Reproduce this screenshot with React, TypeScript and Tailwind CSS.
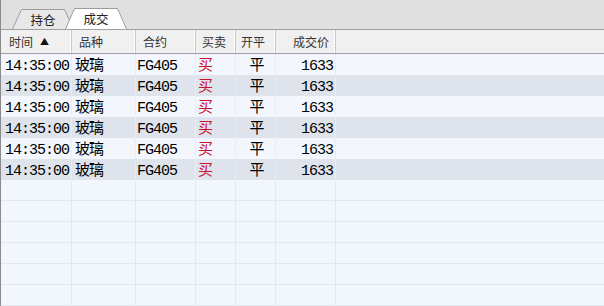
import React from "react";

const cols = [
  { w: 72, label: "时间", hAlign: "justify-start pl-[8px]", dAlign: "justify-start pl-[4px]" },
  { w: 64, label: "品种", hAlign: "justify-start pl-[7px]", dAlign: "justify-start pl-[3px]" },
  { w: 60, label: "合约", hAlign: "justify-start pl-[7px]", dAlign: "justify-start pl-[1px]" },
  { w: 40, label: "买卖", hAlign: "justify-start pl-[6px]", dAlign: "justify-start pl-[2px]" },
  { w: 40, label: "开平", hAlign: "justify-start pl-[5px]", dAlign: "justify-center pl-[2px]" },
  { w: 60, label: "成交价", hAlign: "justify-end pr-[6px]", dAlign: "justify-end pr-[2px]" },
];

const rowData = ["14:35:00", "玻璃", "FG405", "买", "平", "1633"];

const dataFont = { fontFamily: '"Liberation Mono", "Noto Sans CJK SC", monospace' };

function Tab({ label, active, left, width }: { label: string; active: boolean; left: number; width: number }) {
  const h = active ? 21 : 20;
  return (
    <div
      className={`absolute bottom-0 flex items-center justify-center text-[12.5px] text-[#222] ${active ? "z-10" : "z-0"}`}
      style={{ left, width, height: h, fontFamily: '"Noto Sans CJK SC", sans-serif' }}
    >
      <svg className="absolute inset-0" width={width} height={h} viewBox={`0 0 ${width} ${h}`}>
        <path
          d={`M0.5 ${h} L${9.5} 0.5 L${width - 9.5} 0.5 L${width - 0.5} ${h}`}
          fill={active ? "#ffffff" : "#e8e8e8"}
          stroke="#9c9c9c"
          strokeWidth="1"
        />
      </svg>
      <span className="relative pt-[2px]">{label}</span>
    </div>
  );
}

export default function App() {
  const rows = Array.from({ length: 12 }, (_, i) => i);
  return (
    <div className="w-[604px] h-[306px] overflow-hidden bg-[#e0e0e0] border-l border-[#8a8a8a] flex flex-col">
      <div className="relative h-[30px] shrink-0 border-b border-[#a0a0a0]">
        <Tab label="持仓" active={false} left={11} width={62} />
        <Tab label="成交" active={true} left={64} width={62} />
      </div>
      <div
        className="flex h-[24px] shrink-0 bg-[#f0f0f0] border-b border-[#a0a0a0] text-[12px] text-[#333]"
        style={{ fontFamily: '"Noto Sans CJK SC", sans-serif' }}
      >
        {cols.map((c, i) => (
          <div
            key={i}
            className={`flex items-center border-r border-[#c8c8c8] shadow-[inset_-1px_0_0_#ffffff] ${c.hAlign}`}
            style={{ width: i === 0 ? c.w - 1 : c.w }}
          >
            {c.label}
            {i === 0 && <span className="ml-[7px] text-[9px] text-[#111]">▲</span>}
          </div>
        ))}
      </div>
      <div className="flex-1 bg-[#f2f6fd]">
        {rows.map((r) => {
          const filled = r < 6;
          const bg = filled ? (r % 2 === 0 ? "bg-[#f3f7fd]" : "bg-[#dfe4ec]") : "bg-[#f2f6fd]";
          return (
            <div key={r} className={`flex h-[21px] ${bg} ${filled ? "" : "border-b border-[#e3e8f0]"}`}>
              {cols.map((c, i) => (
                <div
                  key={i}
                  className={`flex items-center pt-[3px] leading-[15px] text-[15px] tracking-[-1px] border-r ${
                    filled ? "border-[#e9edf3]" : "border-[#e3e8f0]"
                  } ${c.dAlign} ${i === 3 ? "text-[#cc1030]" : "text-black"}`}
                  style={{ width: i === 0 ? c.w - 1 : c.w, ...dataFont }}
                >
                  {filled ? rowData[i] : ""}
                </div>
              ))}
            </div>
          );
        })}
      </div>
    </div>
  );
}
